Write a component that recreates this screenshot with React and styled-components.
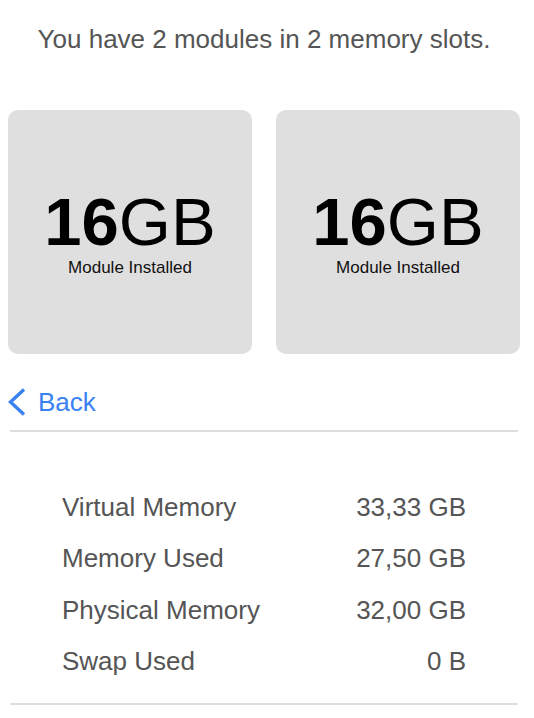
import React from "react";
import styled, { createGlobalStyle } from "styled-components";

const GlobalStyle = createGlobalStyle`
  html, body {
    margin: 0;
    padding: 0;
    background: #ffffff;
    font-family: "Liberation Sans", Arial, sans-serif;
  }
`;

const Page = styled.div`
  width: 534px;
  box-sizing: border-box;
  padding: 24px 14px 0 8px;
  display: flex;
  flex-direction: column;
`;

const Title = styled.p`
  margin: 0;
  font-size: 26px;
  line-height: 30px;
  color: #555555;
  text-align: center;
`;

const Slots = styled.div`
  margin-top: 56px;
  display: grid;
  grid-template-columns: 1fr 1fr;
  gap: 24px;
`;

const Card = styled.div`
  height: 244px;
  box-sizing: border-box;
  padding-top: 3px;
  border-radius: 10px;
  background: #dfdfdf;
  display: flex;
  flex-direction: column;
  align-items: center;
  justify-content: center;
  color: #000;
`;

const Size = styled.div`
  display: flex;
  font-size: 67px;
  line-height: 66px;
`;

const SizeNumber = styled.span`
  font-weight: 700;
`;

const SizeUnit = styled.span`
  font-weight: 400;
`;

const CardLabel = styled.div`
  margin-top: 3px;
  font-size: 17px;
  line-height: 20px;
  color: #111;
`;

const BackButton = styled.button`
  margin-top: 33px;
  height: 30px;
  padding: 0;
  border: 0;
  background: none;
  display: flex;
  align-items: center;
  gap: 11px;
  font-family: inherit;
  font-size: 26px;
  line-height: 30px;
  color: #3a82f3;
  cursor: pointer;
  align-self: flex-start;
`;

const Divider = styled.div`
  height: 2px;
  margin: ${(p) => p.$top}px 2px 0 2px;
  background: #dddddd;
`;

const Stats = styled.div`
  margin-top: 50px;
  padding: 0 54px;
  display: flex;
  flex-direction: column;
`;

const StatRow = styled.div`
  display: flex;
  justify-content: space-between;
  font-size: 26px;
  line-height: 51.3px;
  color: #555555;
`;

const Chevron = () => (
  <svg width="19" height="30" viewBox="0 0 19 30" fill="none">
    <polyline
      points="16,2.5 2.5,15 16,27.5"
      stroke="#3a82f3"
      strokeWidth="3.4"
      strokeLinecap="butt"
      strokeLinejoin="miter"
    />
  </svg>
);

const modules = [
  { size: "16", unit: "GB" },
  { size: "16", unit: "GB" },
];

const stats = [
  ["Virtual Memory", "33,33 GB"],
  ["Memory Used", "27,50 GB"],
  ["Physical Memory", "32,00 GB"],
  ["Swap Used", "0 B"],
];

export default function App() {
  return (
    <>
      <GlobalStyle />
      <Page>
        <Title>You have 2 modules in 2 memory slots.</Title>
        <Slots>
          {modules.map((m, i) => (
            <Card key={i}>
              <Size>
                <SizeNumber>{m.size}</SizeNumber>
                <SizeUnit>{m.unit}</SizeUnit>
              </Size>
              <CardLabel>Module Installed</CardLabel>
            </Card>
          ))}
        </Slots>
        <BackButton>
          <Chevron />
          Back
        </BackButton>
        <Divider $top={13} />
        <Stats>
          {stats.map(([k, v]) => (
            <StatRow key={k}>
              <span>{k}</span>
              <span>{v}</span>
            </StatRow>
          ))}
        </Stats>
        <Divider $top={16} />
      </Page>
    </>
  );
}
